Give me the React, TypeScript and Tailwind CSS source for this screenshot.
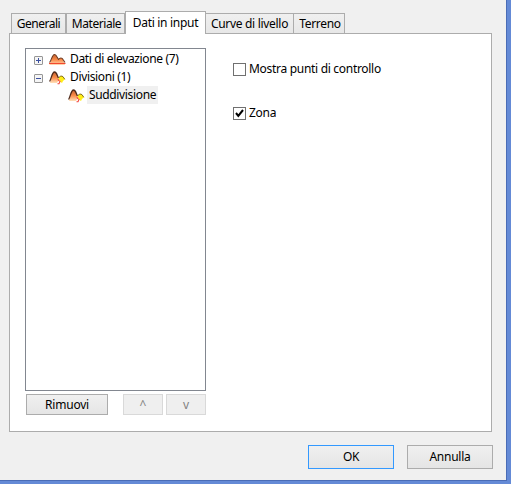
import type { ReactNode } from "react";

function Tab({ label, className }: { label: string; className: string }) {
  return (
    <div className={`flex h-5 items-center justify-center border border-b-0 border-[#acacac] bg-linear-to-b from-[#f0f0f0] to-[#e7e7e7] ${className}`}>
      {label}
    </div>
  );
}

function TerrainIcon({ divided }: { divided?: boolean }) {
  return (
    <svg width="17" height="16" viewBox="0 0 17 16" className="shrink-0">
      <defs>
        <linearGradient id="hill" x1="0" y1="0" x2="0" y2="1">
          <stop offset="0" stopColor="#c4602f" />
          <stop offset="0.5" stopColor="#fa8a48" />
          <stop offset="1" stopColor="#ffe2bc" />
        </linearGradient>
      </defs>
      {divided ? (
        <>
          <path d="M1 14C2 11 3 3 5.5 3C7.8 3 8.3 7 9.5 9L9.5 11.5L8 14Z" fill="url(#hill)" />
          <path d="M9.4 9.5C10.2 7.4 11.5 7 12.8 7C14.5 7.2 15.2 8.8 16 10.3L14 12L13 14L11 12.5Z" fill="#ffee18" />
          <path d="M0.6 12.5C2.3 10 3 3 5.5 3C7.8 3 8.2 6.8 9.5 9" fill="none" stroke="#4e2a1a" strokeWidth="1.3" />
          <path d="M9.5 9C10.7 7 12.7 6.5 14 7.7L15.8 10.3" fill="none" stroke="#75601a" strokeWidth="0.9" />
          <path d="M9 10L9.6 11.5L11 12.5L10 14.8H8.5" fill="none" stroke="#f4473c" strokeWidth="1.1" />
        </>
      ) : (
        <>
          <path d="M0.5 14C2 11 3 3.5 5.5 3.5C7.5 3.5 8 6.5 9.5 8.3C11 6.5 13 6.5 14 8.5L16 14Z" fill="url(#hill)" />
          <path d="M0.5 11.5C2.5 10 3 3.5 5.5 3.5C7.5 3.5 8 6.5 9.5 8.3C11 6.5 13 6.5 14 8.5L16 11.5" fill="none" stroke="#6c3a22" strokeWidth="1.1" />
          <path d="M0 12.5H16.5" stroke="#f3472e" strokeWidth="1.1" />
        </>
      )}
    </svg>
  );
}

function Expander({ open }: { open?: boolean }) {
  return (
    <svg width="9" height="9" viewBox="0 0 9 9" className="mt-[2px] mr-[6px] shrink-0">
      <rect x="0.5" y="0.5" width="8" height="8" rx="0.5" fill="#f5f5f5" stroke="#969696" />
      <path d={open ? "M2 4.5H7" : "M2 4.5H7M4.5 2V7"} stroke="#3b50a0" />
    </svg>
  );
}

function CheckRow({ checked, children }: { checked?: boolean; children: ReactNode }) {
  return (
    <div className="flex h-4 items-center">
      <svg width="13" height="13" viewBox="0 0 13 13" className="mr-[3px] shrink-0">
        <rect x="0.5" y="0.5" width="12" height="12" fill="white" stroke="#707070" />
        {checked && <path d="M3 6L5.3 8.8L10 3" fill="none" stroke="black" strokeWidth="2" />}
      </svg>
      {children}
    </div>
  );
}

function Button({ children, className }: { children: ReactNode; className: string }) {
  return (
    <button className={`flex items-center justify-center border ${className}`}>{children}</button>
  );
}

export default function App() {
  return (
    <div className="h-[484px] w-[511px] overflow-hidden bg-[#648ad6] pr-[4px] pb-[3px] font-['Noto_Sans','Open_Sans',sans-serif] text-[12px] leading-4 whitespace-nowrap text-black">
      <div className="flex h-[481px] w-[507px] flex-col border-r border-b border-[#4a6cb6] bg-[#f0f0f0] pt-[11px] pl-[9px]">
        <div className="relative z-10 -mb-px flex h-[23px] items-end pb-px pl-[2px]">
          <Tab label="Generali" className="w-[55px] tracking-[-0.5px]" />
          <Tab label="Materiale" className="w-[59px] pl-0.5 tracking-[-0.45px]" />
          <div className="-mb-px flex h-[23px] w-[81px] items-center justify-center border border-b-0 border-[#acacac] bg-white pb-px tracking-[-0.3px]">
            Dati in input
          </div>
          <Tab label="Curve di livello" className="w-[88px] border-l-0 tracking-[-0.3px]" />
          <Tab label="Terreno" className="w-[51px] border-l-0 pl-[2px] tracking-[-0.35px]" />
        </div>
        <div className="flex h-[399px] w-[483px] shrink-0 border border-[#acacac] bg-white pt-[14px] pl-[15px]">
          <div className="w-[181px]">
            <div className="h-[343px] border border-[#828790] pt-px pl-2 tracking-[-0.35px]">
              <div className="flex h-[18px] items-center">
                <Expander />
                <TerrainIcon />
                <span className="ml-1">Dati di elevazione (7)</span>
              </div>
              <div className="flex h-[18px] items-center">
                <Expander open />
                <TerrainIcon divided />
                <span className="ml-1">Divisioni (1)</span>
              </div>
              <div className="flex h-[18px] items-center pl-[34px]">
                <TerrainIcon divided />
                <span className="ml-0.5 flex h-[18px] w-[71px] items-center bg-[#f0f0f0] pl-[2px]">Suddivisione</span>
              </div>
            </div>
            <div className="mt-[3px] flex pl-px">
              <Button className="h-[21px] w-[82px] border-[#acacac] bg-linear-to-b from-[#f0f0f0] to-[#e5e5e5] tracking-[-0.2px]">Rimuovi</Button>
              <Button className="ml-[15px] h-[21px] w-10 border-[#d9d9d9] bg-[#efefef] text-[#838383]">^</Button>
              <Button className="ml-[3px] h-[21px] w-10 border-[#d9d9d9] bg-[#efefef] text-[#838383]">v</Button>
            </div>
          </div>
          <div className="ml-[27px] flex flex-col gap-7 pt-[13px] tracking-[-0.3px]">
            <CheckRow>Mostra punti di controllo</CheckRow>
            <CheckRow checked>Zona</CheckRow>
          </div>
        </div>
        <div className="mt-[13px] flex gap-[13px] pl-[299px]">
          <Button className="h-6 w-[86px] border-[#3399ff] bg-linear-to-b from-[#f0f0f0] to-[#e5e5e5] tracking-[-0.4px]">OK</Button>
          <Button className="h-6 w-[86px] border-[#acacac] bg-linear-to-b from-[#f0f0f0] to-[#e5e5e5] tracking-[-0.25px]">Annulla</Button>
        </div>
      </div>
    </div>
  );
}
